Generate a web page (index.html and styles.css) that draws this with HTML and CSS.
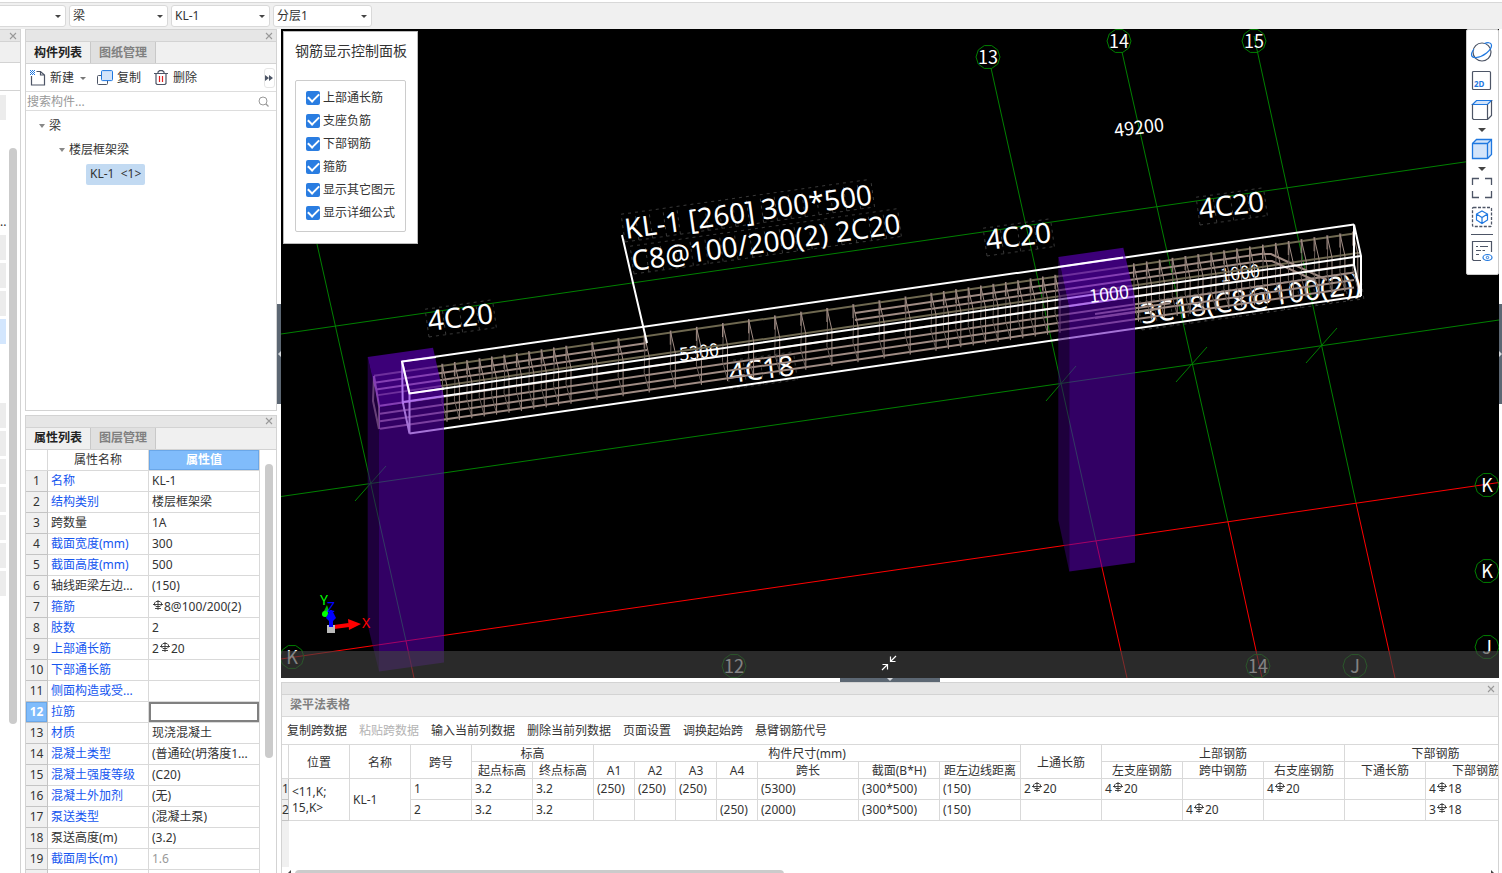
FILE: index.html
```html
<!DOCTYPE html>
<html lang="zh-CN">
  <head>
    <meta charset="UTF-8" />
    <meta name="viewport" content="width=device-width, initial-scale=1.0" />
    <title>梁平法表格</title>
    <link rel="stylesheet" href="styles.css" />
  </head>
  <body>
    <svg class="defs" aria-hidden="true">
      <symbol id="rebar" viewBox="0 0 10 10">
        <path d="M5 0V10M2 8.5H8M0 4.500H10M3 1.500H7L8.500 3V5L7 6.500H3L1.500 5V3Z" fill="none" stroke="currentColor" stroke-width="0.900" />
      </symbol>
      <symbol id="close" viewBox="0 0 8 8">
        <path d="M1 1L7 7M7 1L1 7" fill="none" stroke="#999" stroke-width="1.1" />
      </symbol>
    </svg>

    <header class="topbar">
      <label class="picker"><select aria-label="楼层"><option></option></select></label>
      <label class="picker"><select aria-label="类型"><option>梁</option></select></label>
      <label class="picker"><select aria-label="构件"><option>KL-1</option></select></label>
      <label class="picker"><select aria-label="分层"><option>分层1</option></select></label>
    </header>

    <main class="workspace">
      <aside class="nav-panel">
        <div class="panel-strip"><button class="close" aria-label="关闭"><svg><use href="#close" /></svg></button></div>
        <div class="nav-head"></div>
        <div class="nav-tools"></div>
        <div class="nav-body">
          <div class="nav-items">
            <i class="nav-item"></i>
            <span class="nav-more">..</span>
            <i class="nav-item"></i>
            <i class="nav-item"></i>
            <i class="nav-item"></i>
            <i class="nav-item active"></i>
            <i class="nav-space"></i>
            <i class="nav-item"></i>
            <i class="nav-item"></i>
            <i class="nav-item"></i>
            <i class="nav-item"></i>
            <i class="nav-item"></i>
            <i class="nav-item"></i>
            <i class="nav-item"></i>
          </div>
          <div class="scroll-thumb"></div>
        </div>
      </aside>

      <div class="side">
        <section class="panel list-panel">
          <div class="panel-strip"><button class="close" aria-label="关闭"><svg><use href="#close" /></svg></button></div>
          <div class="tabs">
            <button class="tab active">构件列表</button>
            <button class="tab">图纸管理</button>
          </div>
          <div class="toolbar">
            <button class="tool">
              <svg viewBox="0 0 16 16"><path d="M1.5 6V15H14.5V5L10.5 1.5H6.500M10.500 1.500V5H14.500" fill="none" stroke="#4d5566" stroke-width="1.2" /><path d="M0 0h1v1H0zM2 0h1v1H2zM4 0h1v1H4zM1 1h1v1H1zM3 1h1v1H3zM0 2h1v1H0zM2 2h1v1H2zM4 2h1v1H4zM1 3h1v1H1zM3 3h1v1H3zM0 4h1v1H0zM2 4h1v1H2zM4 4h1v1H4z" fill="#1f78e0" /></svg>
              新建
            </button>
            <i class="caret"></i>
            <button class="tool copy">
              <svg viewBox="0 0 16 16"><rect x="0.500" y="5.500" width="10" height="9" rx="1" fill="#fff" stroke="#4d5566" /><rect x="4.500" y="0.600" width="11" height="10" rx="1" fill="#d3e4fa" stroke="#1f78e0" /></svg>
              复制
            </button>
            <button class="tool">
              <svg viewBox="0 0 16 16"><path d="M1 3.500H15M5 3.500V2L6.500 0.700H9.500L11 2V3.500M3 3.500V13.500L4 14.500H12L13 13.500V3.500" fill="none" stroke="#4d5566" stroke-width="1.200" /><path d="M6.500 6V12M9.500 6V12" stroke="#e02020" stroke-width="1.200" /></svg>
              删除
            </button>
            <button class="more" aria-label="更多"><svg viewBox="0 0 8 6"><path d="M0 0L4 3L0 6ZM4 0L8 3L4 6Z" fill="#4d5566" /></svg></button>
          </div>
          <div class="search">
            <input type="text" placeholder="搜索构件..." aria-label="搜索构件" />
            <svg viewBox="0 0 12 12"><circle cx="5" cy="5" r="4" fill="none" stroke="#999" /><path d="M8 8L10.500 10.500" stroke="#999" stroke-width="1.200" /></svg>
          </div>
          <ul class="tree">
            <li><i class="arrow"></i>梁</li>
            <li class="level-2"><i class="arrow"></i>楼层框架梁</li>
            <li class="level-3"><span class="picked">KL-1 &nbsp;&lt;1&gt;</span></li>
          </ul>
        </section>

        <section class="panel props-panel">
          <div class="panel-strip"><button class="close" aria-label="关闭"><svg><use href="#close" /></svg></button></div>
          <div class="tabs">
            <button class="tab active">属性列表</button>
            <button class="tab">图层管理</button>
          </div>
          <div class="props-body">
            <table class="props">
              <colgroup><col class="c-index" /><col class="c-name" /><col class="c-value" /></colgroup>
              <thead>
                <tr><td></td><th>属性名称</th><th class="current">属性值</th></tr>
              </thead>
              <tbody>
                <tr><th>1</th><td class="link">名称</td><td>KL-1</td></tr>
                <tr><th>2</th><td class="link">结构类别</td><td>楼层框架梁</td></tr>
                <tr><th>3</th><td>跨数量</td><td>1A</td></tr>
                <tr><th>4</th><td class="link">截面宽度(mm)</td><td>300</td></tr>
                <tr><th>5</th><td class="link">截面高度(mm)</td><td>500</td></tr>
                <tr><th>6</th><td>轴线距梁左边...</td><td>(150)</td></tr>
                <tr><th>7</th><td class="link">箍筋</td><td><svg class="rebar"><use href="#rebar" /></svg>8@100/200(2)</td></tr>
                <tr><th>8</th><td class="link">肢数</td><td>2</td></tr>
                <tr><th>9</th><td class="link">上部通长筋</td><td>2<svg class="rebar"><use href="#rebar" /></svg>20</td></tr>
                <tr><th>10</th><td class="link">下部通长筋</td><td></td></tr>
                <tr><th>11</th><td class="link">侧面构造或受...</td><td></td></tr>
                <tr><th class="current">12</th><td class="link">拉筋</td><td class="focused"></td></tr>
                <tr><th>13</th><td class="link">材质</td><td>现浇混凝土</td></tr>
                <tr><th>14</th><td class="link">混凝土类型</td><td>(普通砼(坍落度1...</td></tr>
                <tr><th>15</th><td class="link">混凝土强度等级</td><td>(C20)</td></tr>
                <tr><th>16</th><td class="link">混凝土外加剂</td><td>(无)</td></tr>
                <tr><th>17</th><td class="link">泵送类型</td><td>(混凝土泵)</td></tr>
                <tr><th>18</th><td>泵送高度(m)</td><td>(3.2)</td></tr>
                <tr><th>19</th><td class="link">截面周长(m)</td><td class="muted">1.6</td></tr>
                <tr><th></th><td></td><td></td></tr>
              </tbody>
            </table>
            <div class="scroll-thumb"></div>
          </div>
        </section>
      </div>

      <div class="splitter"><span class="handle"><i class="point-left"></i></span></div>

      <div class="center">
        <div class="viewport">
          <svg class="scene" id="scene" viewBox="281 29 1218 649" preserveAspectRatio="xMinYMin slice">
            <!-- axis grid -->
            <g class="axis">
              <path d="M281 334L1499 157M281 496.500L1499 320" />
              <path d="M306 195L406 641M991 68L1096 541M1122 52L1228 522M1254 36L1356 503" />
              <path d="M355 501L386 466M1046 401L1076 366M1176 382L1207 347M1306 363L1337 328" />
            </g>
            <path class="axis-red" d="M281 659L1499 482.500M406 641L414 678M1096 541L1127 678M1228 522L1262 678M1356 503L1395 678" />

            <g id="bubbles"></g>

            <!-- dimension and rebar notes -->
            <g id="noteFrames"></g>
            <g class="note">
              <text transform="translate(626 239) rotate(-8)">KL-1 [260] 300*500</text>
              <text transform="translate(633 271) rotate(-8)">C8@100/200(2) 2C20</text>
              <text transform="translate(429 331) rotate(-7)">4C20</text>
              <text transform="translate(987 250) rotate(-7)">4C20</text>
              <text transform="translate(1200 219) rotate(-7)">4C20</text>
              <text class="dim" transform="translate(1115 137) rotate(-7)">49200</text>
              <text class="dim" transform="translate(680 361) rotate(-7)">5300</text>
              <text class="dim" transform="translate(1221 282) rotate(-7)">1000</text>
              <text transform="translate(730 383) rotate(-7)">4C18</text>
              <text transform="translate(1142 324) rotate(-8)">3C18(C8@100(2))</text>
            </g>

            <g id="bars" class="bars"></g>

            <!-- beam outline -->
            <g class="beam">
              <path d="M402 361.500L1354 224.500M409.500 393.500L1361 256M402.700 402L1354 265M409.500 433.500L1361 296" />
              <path d="M402 361.500L409.500 393.500V433.500L402.700 402ZM1354 224.500L1361 256V296L1354 265Z" />
              <path d="M622 235L633 283L647 343" />
            </g>

            <!-- columns -->
            <g id="columnA">
              <path class="face-top" d="M367.700 357L433 347.700L444 397L379 408Z" />
              <path class="face-side" d="M367.700 357L379 408V671.500L367.700 625Z" />
              <path class="face-front" d="M379 408L444 397V662.500L379 671.500Z" />
            </g>
            <g id="columnB">
              <path class="face-top" d="M1058.300 257L1123.300 247.700L1135 298L1069.300 308Z" />
              <path class="face-side" d="M1058.300 257L1069.300 308V571.500L1058.300 520Z" />
              <path class="face-front" d="M1069.300 308L1135 298V562.500L1069.300 571.500Z" />
            </g>
            <path class="beam" d="M436 357L402 361.500L409.500 393.500L444 388.500" />
            <path class="beam" d="M1058 267L1123 257.500" />
            <g class="note"><text class="dim" transform="translate(1090 303) rotate(-7)">1000</text></g>

            <!-- coordinate gizmo -->
            <g class="gizmo">
              <path d="M334 627L349 625" stroke="#f00" stroke-width="4" />
              <path d="M348 619L361 624L349 630Z" fill="#f00" />
              <path d="M322 615L327 605L329 611L326 617Z" fill="#0b0" />
              <circle cx="325" cy="614" r="3" fill="#0f0" />
              <rect x="327" y="625" width="8" height="8" fill="#bbb" />
              <path d="M331 627V618" stroke="#00f" stroke-width="4" />
              <path d="M326 618L330 610H332L336 618L333 621H329Z" fill="#00f" />
              <text x="320" y="605" fill="#0f0">Y</text>
              <text x="327" y="612" fill="#00f">Z</text>
              <text x="362" y="628" fill="#f00">X</text>
            </g>
          </svg>

          <div class="bottom-bar">
            <button class="shrink" aria-label="收起"><svg viewBox="0 0 16 16"><path d="M15 1L9.500 6.500M9.500 1.500V6.500H14.500M1 15L6.500 9.500M6.500 14.500V9.500H1.500" fill="none" stroke="#fff" stroke-width="1.200" /></svg></button>
          </div>

          <div class="rebar-dialog">
            <div class="dialog-title">钢筋显示控制面板</div>
            <div class="options">
              <label><input type="checkbox" checked />上部通长筋</label>
              <label><input type="checkbox" checked />支座负筋</label>
              <label><input type="checkbox" checked />下部钢筋</label>
              <label><input type="checkbox" checked />箍筋</label>
              <label><input type="checkbox" checked />显示其它图元</label>
              <label><input type="checkbox" checked />显示详细公式</label>
            </div>
          </div>

          <div class="view-tools">
            <button class="view-tool" aria-label="动态观察"><svg viewBox="0 0 22 22"><circle cx="11" cy="11" r="9" fill="none" stroke="#4d5566" stroke-width="1.200" /><path d="M3 8C-1 13 0 17 5 16.500C12 16 21 9 20.500 4C20 1 16 1.500 13.500 2.500" fill="none" stroke="#1f78e0" stroke-width="1.200" /></svg></button>
            <button class="view-tool" aria-label="二维"><svg viewBox="0 0 22 22"><rect x="1.500" y="1.500" width="18" height="18" rx="1" fill="none" stroke="#4d5566" stroke-width="1.200" /><text x="3" y="17" class="two-d">2D</text></svg></button>
            <button class="view-tool" aria-label="俯视"><svg viewBox="0 0 22 22"><path d="M1.500 5.500L5.500 1.500H20.500L16.500 5.500Z" fill="#d3e4fa" stroke="#1f78e0" stroke-width="1.200" /><path d="M1.500 5.500V19.500L2.500 20.500H16.500V5.500M16.500 20.500L20.500 16.500V1.500" fill="none" stroke="#4d5566" stroke-width="1.200" /></svg></button>
            <i class="caret"></i>
            <button class="view-tool" aria-label="实体显示"><svg viewBox="0 0 22 22"><path d="M1.500 5.500L5.500 1.500H20.500V16.500L16.500 20.500H1.500Z" fill="#d3e4fa" stroke="#1f78e0" stroke-width="1.300" /><path d="M1.500 5.500H16.500V20.500M16.500 5.500L20.500 1.500" fill="none" stroke="#1f78e0" stroke-width="1.300" /></svg></button>
            <i class="caret"></i>
            <button class="view-tool" aria-label="全屏"><svg viewBox="0 0 22 22"><path d="M1.500 8V1.500H8M14 1.500H20.500V8M20.500 14V20.500H14M8 20.500H1.500V14" fill="none" stroke="#4d5566" stroke-width="1.300" /></svg></button>
            <button class="view-tool last" aria-label="局部三维"><svg viewBox="0 0 22 22"><rect x="1.500" y="1.500" width="19" height="19" rx="1" fill="none" stroke="#4d5566" stroke-width="1.300" stroke-dasharray="3 1.500" /><path d="M11 5L16.500 8V14L11 17.500L5.500 14V8ZM5.500 8L11 11.500L16.500 8M11 11.500V17.500" fill="none" stroke="#1f78e0" stroke-width="1.200" /></svg></button>
            <button class="view-tool" aria-label="显示设置"><svg viewBox="0 0 22 22"><path d="M10 20.500H2.500L1.500 19.500V1.500H20.500V12M5 6.500H7M9 6.500H17M5 10.500H10M11.500 10.500H14M5 14.500H8" fill="none" stroke="#4d5566" stroke-width="1.200" /><ellipse cx="16.500" cy="17.500" rx="4.500" ry="3" fill="#fff" stroke="#1f78e0" stroke-width="1.200" /><circle cx="16.500" cy="17.500" r="1.200" fill="none" stroke="#1f78e0" /></svg></button>
          </div>
        </div>

        <div class="splitter-h"><span class="handle-h"><i class="point-down"></i></span></div>

        <section class="panel sheet-panel">
          <div class="panel-strip"><button class="close" aria-label="关闭"><svg><use href="#close" /></svg></button></div>
          <div class="sheet-title">梁平法表格</div>
          <div class="sheet-tools">
            <button>复制跨数据</button>
            <button disabled>粘贴跨数据</button>
            <button>输入当前列数据</button>
            <button>删除当前列数据</button>
            <button>页面设置</button>
            <button>调换起始跨</button>
            <button>悬臂钢筋代号</button>
          </div>
          <div class="sheet-body">
            <table class="sheet">
              <colgroup>
                <col class="w-index" />
                <col class="w-60" span="5" />
                <col class="w-40" span="4" />
                <col class="w-100" />
                <col class="w-80" span="7" />
                <col class="w-100" />
              </colgroup>
              <thead>
                <tr>
                  <td rowspan="2"></td>
                  <th rowspan="2">位置</th>
                  <th rowspan="2">名称</th>
                  <th rowspan="2">跨号</th>
                  <th colspan="2">标高</th>
                  <th colspan="7">构件尺寸(mm)</th>
                  <th rowspan="2">上通长筋</th>
                  <th colspan="3">上部钢筋</th>
                  <th colspan="2">下部钢筋</th>
                </tr>
                <tr>
                  <th>起点标高</th><th>终点标高</th>
                  <th>A1</th><th>A2</th><th>A3</th><th>A4</th>
                  <th>跨长</th><th>截面(B*H)</th><th>距左边线距离</th>
                  <th>左支座钢筋</th><th>跨中钢筋</th><th>右支座钢筋</th>
                  <th>下通长筋</th><th>下部钢筋</th>
                </tr>
              </thead>
              <tbody>
                <tr>
                  <th class="index">1</th>
                  <td rowspan="2">&lt;11,K;<br />15,K&gt;</td>
                  <td rowspan="2">KL-1</td>
                  <td>1</td><td>3.2</td><td>3.2</td>
                  <td>(250)</td><td>(250)</td><td>(250)</td><td></td>
                  <td>(5300)</td><td>(300*500)</td><td>(150)</td>
                  <td>2<svg class="rebar"><use href="#rebar" /></svg>20</td>
                  <td>4<svg class="rebar"><use href="#rebar" /></svg>20</td>
                  <td></td>
                  <td>4<svg class="rebar"><use href="#rebar" /></svg>20</td>
                  <td></td>
                  <td>4<svg class="rebar"><use href="#rebar" /></svg>18</td>
                </tr>
                <tr>
                  <th class="index">2</th>
                  <td>2</td><td>3.2</td><td>3.2</td>
                  <td></td><td></td><td></td><td>(250)</td>
                  <td>(2000)</td><td>(300*500)</td><td>(150)</td>
                  <td></td><td></td>
                  <td>4<svg class="rebar"><use href="#rebar" /></svg>20</td>
                  <td></td><td></td>
                  <td>3<svg class="rebar"><use href="#rebar" /></svg>18</td>
                </tr>
              </tbody>
            </table>
            <div class="index-rest"></div>
          </div>
          <div class="scroll-x"><i class="point-left dark"></i><span class="track"><span class="thumb-x"></span></span><i class="point-right dark"></i></div>
        </section>
      </div>

      <div class="edge"><span class="handle"><i class="point-right"></i></span></div>
    </main>

    <script src="scene.js"></script>
  </body>
</html>
```

FILE: styles.css
```css
* {
  margin: 0;
  padding: 0;
  box-sizing: border-box;
}
body {
  display: flex;
  flex-direction: column;
  height: 100vh;
  overflow: hidden;
  background: #fff;
  color: #333;
  font: 12px/16px "Noto Sans", "Noto Sans CJK SC", sans-serif;
}
button,
input,
select {
  font: inherit;
  color: inherit;
  background: none;
  border: none;
}
button {
  cursor: pointer;
}
svg {
  display: block;
}
.defs {
  position: absolute;
  width: 0;
  height: 0;
}

/* top bar */
.topbar {
  display: flex;
  align-items: center;
  gap: 3px;
  height: 29px;
  padding-top: 2px;
  background: #f0f0f0;
  box-shadow: inset 0 2px #fff, inset 0 3px #d8d8d8;
  overflow: hidden;
}
.picker {
  position: relative;
  flex: none;
  width: 99px;
}
.picker:first-child {
  margin-left: -33px;
}
.picker select {
  display: block;
  width: 100%;
  height: 22px;
  padding: 0 3px;
  background: #fff;
  border: 1px solid #d9d9d9;
  border-radius: 3px;
  appearance: none;
}
.picker::after {
  content: "";
  position: absolute;
  right: 5px;
  top: 10px;
  border: 3px solid transparent;
  border-top-color: #444;
  border-bottom: none;
}

.workspace {
  display: flex;
  flex: 1;
  min-height: 0;
}

/* shared panel parts */
.panel {
  display: flex;
  flex-direction: column;
  min-height: 0;
  border: 1px solid #d3d3d3;
  overflow: hidden;
}
.panel-strip {
  display: flex;
  flex: none;
  justify-content: flex-end;
  align-items: center;
  height: 11px;
  padding-right: 3px;
  background: #e6e6e6;
}
.close svg {
  width: 8px;
  height: 8px;
}
.tabs {
  display: flex;
  flex: none;
  height: 23px;
  background: #f0f0f0;
  border-top: 1px solid #d3d3d3;
  border-bottom: 1px solid #d3d3d3;
}
.tab {
  width: 65px;
  background: #e0e0e0;
  border-right: 1px solid #c8c8c8;
  color: #808080;
  font-weight: bold;
}
.tab.active {
  background: #f0f0f0;
  color: #222;
}
.scroll-thumb {
  width: 8px;
  background: #cbcbcb;
  border-radius: 4px;
}
.caret {
  border: 3px solid transparent;
  border-top-color: #777;
  border-bottom: none;
}

/* clipped navigation column */
.nav-panel {
  display: flex;
  flex-direction: column;
  flex: none;
  width: 21px;
  border-top: 1px solid #d3d3d3;
  border-right: 1px solid #d3d3d3;
  overflow: hidden;
}
.nav-head {
  flex: none;
  height: 22px;
  background: #f0f0f0;
  border-top: 1px solid #d3d3d3;
  border-bottom: 1px solid #d3d3d3;
}
.nav-tools {
  flex: none;
  height: 28px;
  border-bottom: 1px solid #d3d3d3;
}
.nav-body {
  display: flex;
  flex: 1;
  gap: 2px;
  min-height: 0;
  padding-top: 4px;
}
.nav-items {
  display: flex;
  flex-direction: column;
  gap: 3px;
  width: 7px;
}
.nav-item {
  flex: none;
  width: 6px;
  height: 25px;
  background: #ececec;
}
.nav-item.active {
  background: #d3e6fd;
}
.nav-more {
  flex: none;
  height: 109px;
  padding-top: 91px;
}
.nav-space {
  flex: none;
  height: 53px;
}
.nav-body .scroll-thumb {
  height: 74%;
  margin-top: 53px;
}

/* left side panels */
.side {
  display: flex;
  flex-direction: column;
  flex: none;
  gap: 4px;
  width: 252px;
  margin-left: 4px;
}
.list-panel {
  flex: 381 1 0;
}
.props-panel {
  flex: 459 1 0;
  border-bottom: none;
}
.toolbar {
  display: flex;
  flex: none;
  align-items: center;
  height: 28px;
  padding: 1px 1px 0 4px;
  border-bottom: 1px solid #ddd;
}
.tool {
  display: flex;
  align-items: center;
  gap: 4px;
}
.tool svg {
  width: 16px;
  height: 16px;
}
.toolbar .caret {
  margin: 0 11px 0 6px;
}
.tool.copy {
  margin-right: 12px;
}
.more {
  width: 11px;
  height: 20px;
  margin-left: auto;
  border: 1px solid #e6e6e6;
  border-radius: 3px;
}
.more svg {
  width: 8px;
  height: 6px;
}
.search {
  display: flex;
  flex: none;
  align-items: center;
  height: 19px;
  padding: 1px 6px 0 1px;
  border-bottom: 1px solid #ddd;
}
.search input {
  flex: 1;
  min-width: 0;
  height: 16px;
  outline: none;
}
.search input::placeholder {
  color: #999;
}
.search svg {
  width: 12px;
  height: 12px;
}
.tree {
  padding: 3px 0 0 13px;
  list-style: none;
}
.tree li {
  display: flex;
  align-items: center;
  height: 24px;
}
.tree .level-2 {
  padding-left: 20px;
}
.tree .level-3 {
  padding-left: 47px;
}
.arrow {
  margin-right: 4px;
  border: 3px solid transparent;
  border-top: 4px solid #888;
  border-bottom: none;
}
.picked {
  height: 21px;
  padding: 0 4px;
  line-height: 20px;
  background: #c2daf2;
  border-radius: 2px;
}

/* property grid */
.props-body {
  display: flex;
  gap: 5px;
  min-height: 0;
  overflow: hidden;
}
.props-body .scroll-thumb {
  height: 294px;
  margin-top: 14px;
}
.props {
  width: 234px;
  height: 0;
  table-layout: fixed;
  border-spacing: 0;
}
.c-index {
  width: 22px;
}
.c-name {
  width: 101px;
}
.c-value {
  width: 111px;
}
.props td,
.props th {
  height: 21px;
  padding: 0 3px;
  border-right: 1px solid #d9d9d9;
  border-bottom: 1px solid #d9d9d9;
  font-weight: normal;
  line-height: 16px;
  white-space: nowrap;
}
.props tbody th {
  padding: 0;
  background: #f0f0f0;
  border-color: #c4c4c4;
}
.props .current,
.props tbody .current {
  background: #80bcfb;
  box-shadow: inset 0 0 0 1px #6aa7e8;
  color: #fff;
  font-weight: bold;
}
.props .link {
  color: #1456f0;
}
.props .muted {
  color: #999;
}
.props .focused {
  box-shadow: inset 0 0 0 2px #808080;
}
.rebar {
  display: inline-block;
  width: 10px;
  height: 10px;
  margin: 0 1px;
  vertical-align: 1px;
}

/* splitters */
.splitter,
.edge {
  display: flex;
  flex: none;
  align-items: center;
  width: 4px;
  padding-bottom: 194px;
}
.edge {
  width: 3px;
}
.handle {
  display: flex;
  align-items: center;
  justify-content: center;
  width: 100%;
  height: 100px;
  background: #5c6773;
}
.splitter-h {
  display: flex;
  flex: none;
  justify-content: center;
  height: 4px;
}
.handle-h {
  display: flex;
  justify-content: center;
  width: 100px;
  background: #5c6773;
}
.point-left,
.point-right,
.point-down {
  width: 0;
  height: 0;
  border: 3px solid transparent;
}
.point-left {
  border-left: none;
  border-right-color: #d5d9dd;
}
.point-right {
  border-right: none;
  border-left-color: #d5d9dd;
}
.point-down {
  border-bottom: none;
  border-top-color: #d5d9dd;
}

/* 3D viewport */
.center {
  display: flex;
  flex: 1;
  flex-direction: column;
  min-width: 0;
}
.viewport {
  position: relative;
  flex: 1;
  min-height: 0;
  background: #000;
  overflow: hidden;
}
.scene {
  width: 100%;
  height: 100%;
}
.axis {
  fill: none;
  stroke: #008000;
}
.axis-red {
  fill: none;
  stroke: #f00;
}
.bubble polygon {
  fill: none;
  stroke: #008000;
}
.bubble text {
  fill: #fff;
  font: 18px "Noto Sans CJK SC", sans-serif;
  text-anchor: middle;
}
.note text {
  fill: #fff;
  font: 28px "Noto Sans", "Noto Sans CJK SC", sans-serif;
}
.note .dim {
  font: 18px "Noto Sans CJK SC", sans-serif;
}
.note-frame {
  fill: none;
  stroke: #383838;
  stroke-dasharray: 3 4;
}
.bars path {
  fill: none;
  stroke: #a08c84;
  stroke-width: 2;
}
.bars .olive {
  stroke: #6e6850;
}
.bars .stirrup {
  stroke-width: 1;
}
.bars .stirrup-back {
  stroke: #6b5f5a;
}
.beam {
  fill: none;
  stroke: #fff;
  stroke-width: 2;
}
.face-top {
  fill: rgba(109, 0, 218, 0.55);
}
.face-front {
  fill: rgba(91, 0, 182, 0.55);
}
.face-side {
  fill: rgba(55, 0, 109, 0.55);
}
.gizmo text {
  font: 14px "Noto Sans", sans-serif;
}
.bottom-bar {
  position: absolute;
  left: 0;
  right: 0;
  bottom: 0;
  display: flex;
  align-items: center;
  justify-content: center;
  height: 27px;
  padding: 0 3px 3px 0;
  background: rgba(65, 65, 65, 0.65);
}
.shrink svg {
  width: 16px;
  height: 16px;
}

.rebar-dialog {
  position: absolute;
  left: 2px;
  top: 2px;
  width: 135px;
  height: 213px;
  padding: 10px 11px;
  background: #fff;
  border: 1px solid #bbb;
}
.dialog-title {
  font-size: 14px;
  line-height: 18px;
  white-space: nowrap;
}
.options {
  display: flex;
  flex-direction: column;
  gap: 3px;
  width: 111px;
  margin-top: 20px;
  padding: 7px 10px 8px;
  border: 1px solid #ccc;
  border-radius: 2px;
}
.options label {
  display: flex;
  align-items: center;
  gap: 3px;
  height: 20px;
  white-space: nowrap;
}
.options input {
  display: grid;
  flex: none;
  width: 14px;
  height: 14px;
  place-items: center;
  background: #2a7de1;
  border-radius: 2px;
  appearance: none;
}
.options input:checked::after {
  content: "";
  width: 5px;
  height: 9px;
  margin-bottom: 3px;
  border: solid #fff;
  border-width: 0 2px 2px 0;
  transform: rotate(45deg);
}

.view-tools {
  position: absolute;
  right: 0;
  top: 0;
  display: flex;
  flex-direction: column;
  align-items: center;
  width: 33px;
  padding: 11px 1px 5px 0;
  background: #fff;
  border: 1px solid #ccc;
  border-radius: 2px;
}
.view-tool {
  margin-bottom: 7px;
}
.view-tool svg {
  width: 22px;
  height: 22px;
  overflow: visible;
}
.view-tools .caret {
  margin: 0 0 6px;
  border-width: 4px 4px 0;
  border-top-color: #444;
}
.view-tool.last {
  padding-bottom: 6px;
  border-bottom: 1px solid #4d5566;
  margin-bottom: 5px;
}
.two-d {
  fill: #1f78e0;
  font: bold 8px "Noto Sans", sans-serif;
}

/* beam sheet */
.sheet-panel {
  flex: none;
  height: 191px;
  border-bottom: none;
}
.sheet-title {
  flex: none;
  height: 23px;
  padding-left: 8px;
  line-height: 20px;
  background: #f0f0f0;
  border-top: 1px solid #d3d3d3;
  border-bottom: 1px solid #d9d9d9;
  color: #808080;
  font-weight: bold;
}
.sheet-tools {
  display: flex;
  flex: none;
  gap: 12px;
  height: 27px;
  padding-left: 5px;
}
.sheet-tools button {
  white-space: nowrap;
}
.sheet-tools button:disabled {
  color: #b3b3b3;
}
.sheet-body {
  display: flex;
  flex: 1;
  flex-direction: column;
  min-height: 0;
  border-top: 1px solid #d9d9d9;
  overflow: hidden;
}
.sheet {
  flex: none;
  width: 1244px;
  table-layout: fixed;
  border-spacing: 0;
}
.w-index {
  width: 7px;
}
.w-40 {
  width: 41px;
}
.w-60 {
  width: 61px;
}
.w-80 {
  width: 81px;
}
.w-100 {
  width: 101px;
}
.sheet th,
.sheet td {
  height: 17px;
  padding: 0 3px;
  border-right: 1px solid #d9d9d9;
  border-bottom: 1px solid #d9d9d9;
  font-weight: normal;
  line-height: 16px;
  white-space: nowrap;
}
.sheet thead th {
  padding: 2px 0 0;
  line-height: 14px;
}
.sheet tbody th,
.sheet tbody td {
  height: 21px;
}
.sheet .index {
  padding: 0;
  background: #f0f0f0;
  border-color: #c4c4c4;
}
.index-rest {
  flex: 1;
  width: 7px;
  background: #f0f0f0;
}
.scroll-x {
  display: flex;
  flex: none;
  gap: 4px;
  height: 6px;
  padding: 3px 4px 0 6px;
  overflow: hidden;
}
.track {
  flex: 1;
}
.thumb-x {
  display: block;
  width: 41%;
  height: 8px;
  background: #cbcbcb;
  border-radius: 4px;
}
.point-left.dark {
  border-right-color: #444;
}
.point-right.dark {
  border-left-color: #444;
}
```

FILE: scene.js
```javascript
const SVG_NS = "http://www.w3.org/2000/svg";
const slope = -0.1451;

function add(parent, name, attrs, text) {
  const el = document.createElementNS(SVG_NS, name);
  for (const key in attrs) el.setAttribute(key, attrs[key]);
  if (text) el.textContent = text;
  parent.appendChild(el);
  return el;
}

// height of the top rebar at x
function topAt(x) {
  return 375.7 + slope * (x - 374);
}

// axis bubbles
const bubbles = [
  ["13", 988, 57],
  ["14", 1119, 41],
  ["15", 1254, 41],
  ["K", 1487, 485],
  ["K", 1487, 571],
  ["J", 1487, 647],
  ["K", 292, 657],
  ["12", 734, 666],
  ["14", 1258, 666],
  ["J", 1355, 666],
];
const bubbleLayer = document.getElementById("bubbles");
bubbles.forEach(([label, x, y]) => {
  const g = add(bubbleLayer, "g", { class: "bubble" });
  const points = [];
  for (let i = 0; i < 10; i++) {
    const a = (i / 10) * Math.PI * 2;
    points.push(`${x + 12 * Math.cos(a)},${y + 12 * Math.sin(a)}`);
  }
  add(g, "polygon", { points: points.join(" ") });
  add(g, "text", { x: x, y: y + 7 }, label);
});

// dashed cells round the notes: x, y, cell count, cell width
const frames = [
  [625, 242, 18, 14],
  [634, 274, 18, 15],
  [429, 337, 4, 17],
  [987, 256, 4, 17],
  [1200, 225, 4, 17],
  [730, 389, 4, 17],
  [1142, 330, 14, 16],
];
const frameLayer = document.getElementById("noteFrames");
frames.forEach(([x, y, count, w]) => {
  let d = `M0 0H${count * w}M0 -28H${count * w}`;
  for (let i = 0; i <= count; i++) d += `M${i * w} 0V-28`;
  add(frameLayer, "path", {
    class: "note-frame",
    d: d,
    transform: `translate(${x} ${y}) rotate(-8)`,
  });
});

// longitudinal bars
const bars = document.getElementById("bars");
function bar(x1, x2, offset, cls) {
  add(bars, "path", {
    class: cls || "",
    d: `M${x1} ${topAt(x1) + offset}L${x2} ${topAt(x2) + offset}`,
  });
}
[31, 39, 46.5, 54].forEach((offset) => bar(380, 1354, offset));
[7, 14].forEach((offset) => {
  bar(376, 647, offset);
  bar(855, 1264, offset);
});
bar(1095, 1170, 43);
bar(1095, 1158, 47);
bar(374, 1354, 0, "olive");
bar(378, 1360, 20, "olive");
add(bars, "path", { d: "M1262 254L1271 254L1327 280M1264 261L1272 261L1316 281" });
add(bars, "path", { d: "M374 376L373 401L379 429M374 376L379 406V429" });

// stirrups
const stirrups = [];
for (let x = 442; x < 570; x += 12.4) stirrups.push(x);
for (let x = 592; x < 925; x += 26.1) stirrups.push(x);
for (let x = 931; x < 1057; x += 12.4) stirrups.push(x);
for (let x = 1133.5; x < 1355; x += 12.9) stirrups.push(x);
stirrups.forEach((x) => {
  const y = topAt(x) - 2;
  add(bars, "path", { class: "stirrup stirrup-back", d: `M${x + 1} ${y}L${x} ${y + 38}L${x + 5} ${y + 57}` });
  add(bars, "path", { class: "stirrup", d: `M${x} ${y}L${x + 5} ${y + 22}V${y + 58}M${x} ${y}V${y + 14}` });
});
```
